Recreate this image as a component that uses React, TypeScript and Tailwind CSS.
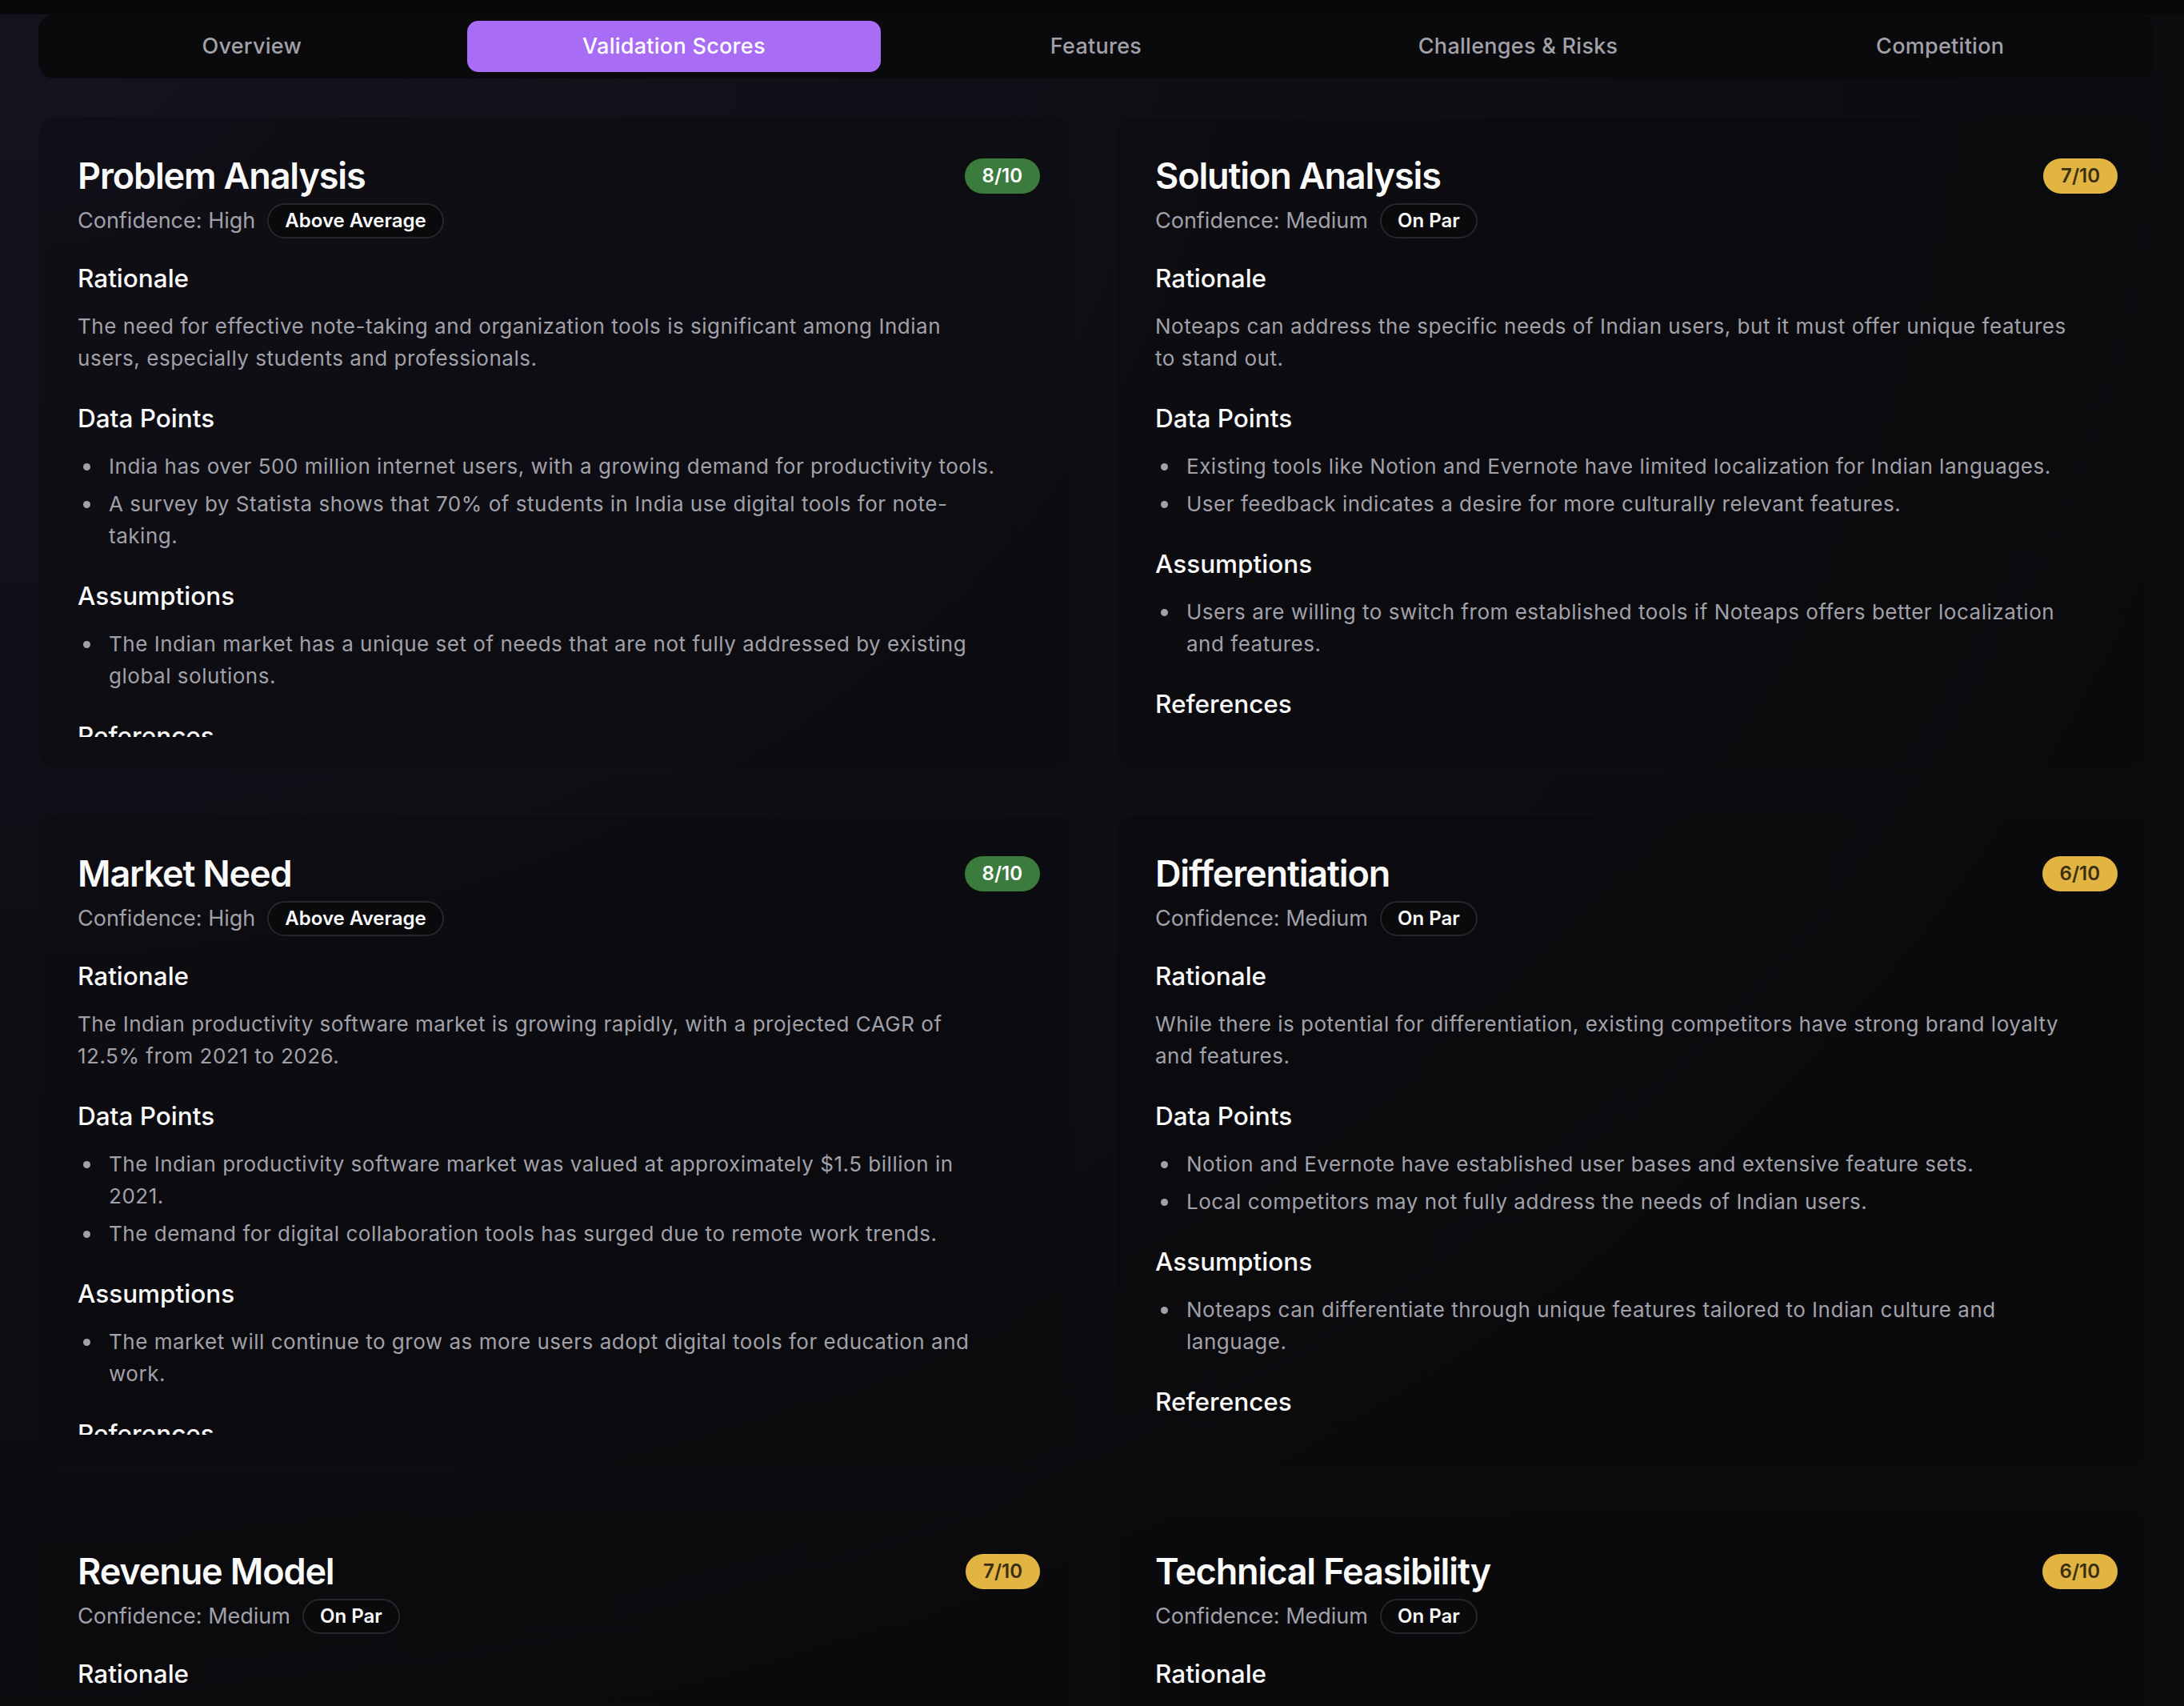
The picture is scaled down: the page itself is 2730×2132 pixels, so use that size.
import type { ReactNode } from "react";

type Score = {
  title: string;
  score: number;
  confidence: string;
  benchmark: string;
  rationale: string;
  dataPoints: string[];
  assumptions: string[];
};

const tabs = ["Overview", "Validation Scores", "Features", "Challenges & Risks", "Competition"];

const scores: Score[] = [
  {
    title: "Problem Analysis",
    score: 8,
    confidence: "High",
    benchmark: "Above Average",
    rationale:
      "The need for effective note-taking and organization tools is significant among Indian users, especially students and professionals.",
    dataPoints: [
      "India has over 500 million internet users, with a growing demand for productivity tools.",
      "A survey by Statista shows that 70% of students in India use digital tools for note-taking.",
    ],
    assumptions: [
      "The Indian market has a unique set of needs that are not fully addressed by existing global solutions.",
    ],
  },
  {
    title: "Solution Analysis",
    score: 7,
    confidence: "Medium",
    benchmark: "On Par",
    rationale:
      "Noteaps can address the specific needs of Indian users, but it must offer unique features to stand out.",
    dataPoints: [
      "Existing tools like Notion and Evernote have limited localization for Indian languages.",
      "User feedback indicates a desire for more culturally relevant features.",
    ],
    assumptions: [
      "Users are willing to switch from established tools if Noteaps offers better localization and features.",
    ],
  },
  {
    title: "Market Need",
    score: 8,
    confidence: "High",
    benchmark: "Above Average",
    rationale:
      "The Indian productivity software market is growing rapidly, with a projected CAGR of 12.5% from 2021 to 2026.",
    dataPoints: [
      "The Indian productivity software market was valued at approximately $1.5 billion in 2021.",
      "The demand for digital collaboration tools has surged due to remote work trends.",
    ],
    assumptions: [
      "The market will continue to grow as more users adopt digital tools for education and work.",
    ],
  },
  {
    title: "Differentiation",
    score: 6,
    confidence: "Medium",
    benchmark: "On Par",
    rationale:
      "While there is potential for differentiation, existing competitors have strong brand loyalty and features.",
    dataPoints: [
      "Notion and Evernote have established user bases and extensive feature sets.",
      "Local competitors may not fully address the needs of Indian users.",
    ],
    assumptions: [
      "Noteaps can differentiate through unique features tailored to Indian culture and language.",
    ],
  },
  {
    title: "Revenue Model",
    score: 7,
    confidence: "Medium",
    benchmark: "On Par",
    rationale:
      "A freemium model with premium tiers for advanced features can work, but price sensitivity in India is high.",
    dataPoints: [
      "Most Indian users prefer free tools and are hesitant to pay for subscriptions.",
    ],
    assumptions: ["Users will pay for features that clearly save time."],
  },
  {
    title: "Technical Feasibility",
    score: 6,
    confidence: "Medium",
    benchmark: "On Par",
    rationale:
      "Building robust multilingual support and offline sync is achievable but requires significant engineering effort.",
    dataPoints: ["Indic language input and OCR libraries are available but vary in quality."],
    assumptions: ["The team can hire engineers with localization experience."],
  },
];

function Section({ title, children }: { title: string; children: ReactNode }) {
  return (
    <div>
      <h3 className="text-[31.5px] leading-[49px] font-medium text-[#fafafa] mb-[16px]">{title}</h3>
      {children}
    </div>
  );
}

function Bullets({ items }: { items: string[] }) {
  return (
    <ul className="ml-[7px] flex flex-col gap-[7px] text-[26px] leading-[40px] tracking-[0.02em] text-[#a1a1aa]">
      {items.map((item) => (
        <li key={item} className="flex gap-[23px]">
          <span className="mt-[16px] size-[9px] shrink-0 rounded-full bg-[#a1a1aa]" />
          <span>{item}</span>
        </li>
      ))}
    </ul>
  );
}

function ScoreCard({ data }: { data: Score }) {
  const high = data.score >= 8;
  return (
    <div className="h-[816px] rounded-[24px] border border-white/[0.02] bg-[#09090c]/40 pl-[48px] pr-[38px] pt-[46px] pb-[39px] flex flex-col">
      <div className="flex-1 min-h-0 overflow-hidden">
        <div className="flex items-center justify-between h-[56px]">
          <h2 className="text-[45px] leading-[56px] font-semibold tracking-tight text-[#fafafa]">{data.title}</h2>
          <span
            className={
              high
                ? "h-[44px] px-[22px] rounded-full bg-[#3b7b3d] text-white text-[24px] font-semibold flex items-center"
                : "h-[44px] px-[22px] rounded-full bg-[#e2b441] text-[#3a2f12] text-[24px] font-semibold flex items-center"
            }
          >
            {data.score}/10
          </span>
        </div>
        <div className="mt-[6px] flex items-center gap-[15px] h-[44px]">
          <span className="text-[27px] text-[#a1a1aa]">Confidence: {data.confidence}</span>
          <span className="h-[44px] px-[20px] rounded-full border-2 border-[#26262b] bg-[#0a0a0d] text-[24px] font-semibold text-[#fafafa] flex items-center">
            {data.benchmark}
          </span>
        </div>
        <div className="mt-[25px] pr-[46px] flex flex-col gap-[30px]">
          <Section title="Rationale">
            <p className="text-[26px] leading-[40px] tracking-[0.02em] text-[#a1a1aa]">{data.rationale}</p>
          </Section>
          <Section title="Data Points">
            <Bullets items={data.dataPoints} />
          </Section>
          <Section title="Assumptions">
            <Bullets items={data.assumptions} />
          </Section>
          <Section title="References">
            <div className="h-[40px]" />
          </Section>
        </div>
      </div>
    </div>
  );
}

export default function App() {
  return (
    <div
      className="h-[2132px] overflow-hidden bg-[radial-gradient(ellipse_at_top_left,#16131f_0%,#0f0e15_40%,#0b0b0d_80%)]"
      style={{ fontFamily: "Inter, 'Noto Sans', sans-serif" }}
    >
      <div className="pl-[48px] pr-[38px] pt-[18px] bg-[linear-gradient(to_bottom,#08080a_18px,transparent_18px)]">
        <div className="h-[80px] p-2 rounded-[20px] bg-[#0a0a0c] grid grid-cols-5 gap-[10px]">
          {tabs.map((tab) => (
            <button
              key={tab}
              className={
                tab === "Validation Scores"
                  ? "rounded-[14px] bg-[#a96cf5] text-white text-[27px] font-medium tracking-[0.01em]"
                  : "rounded-[14px] text-[#a1a1aa] text-[27px] font-medium tracking-[0.01em]"
              }
            >
              {tab}
            </button>
          ))}
        </div>
      </div>
      <div className="pl-[48px] pr-[44px] mt-[47px] grid grid-cols-2 gap-[56px]">
        {scores.map((s) => (
          <ScoreCard key={s.title} data={s} />
        ))}
      </div>
    </div>
  );
}
